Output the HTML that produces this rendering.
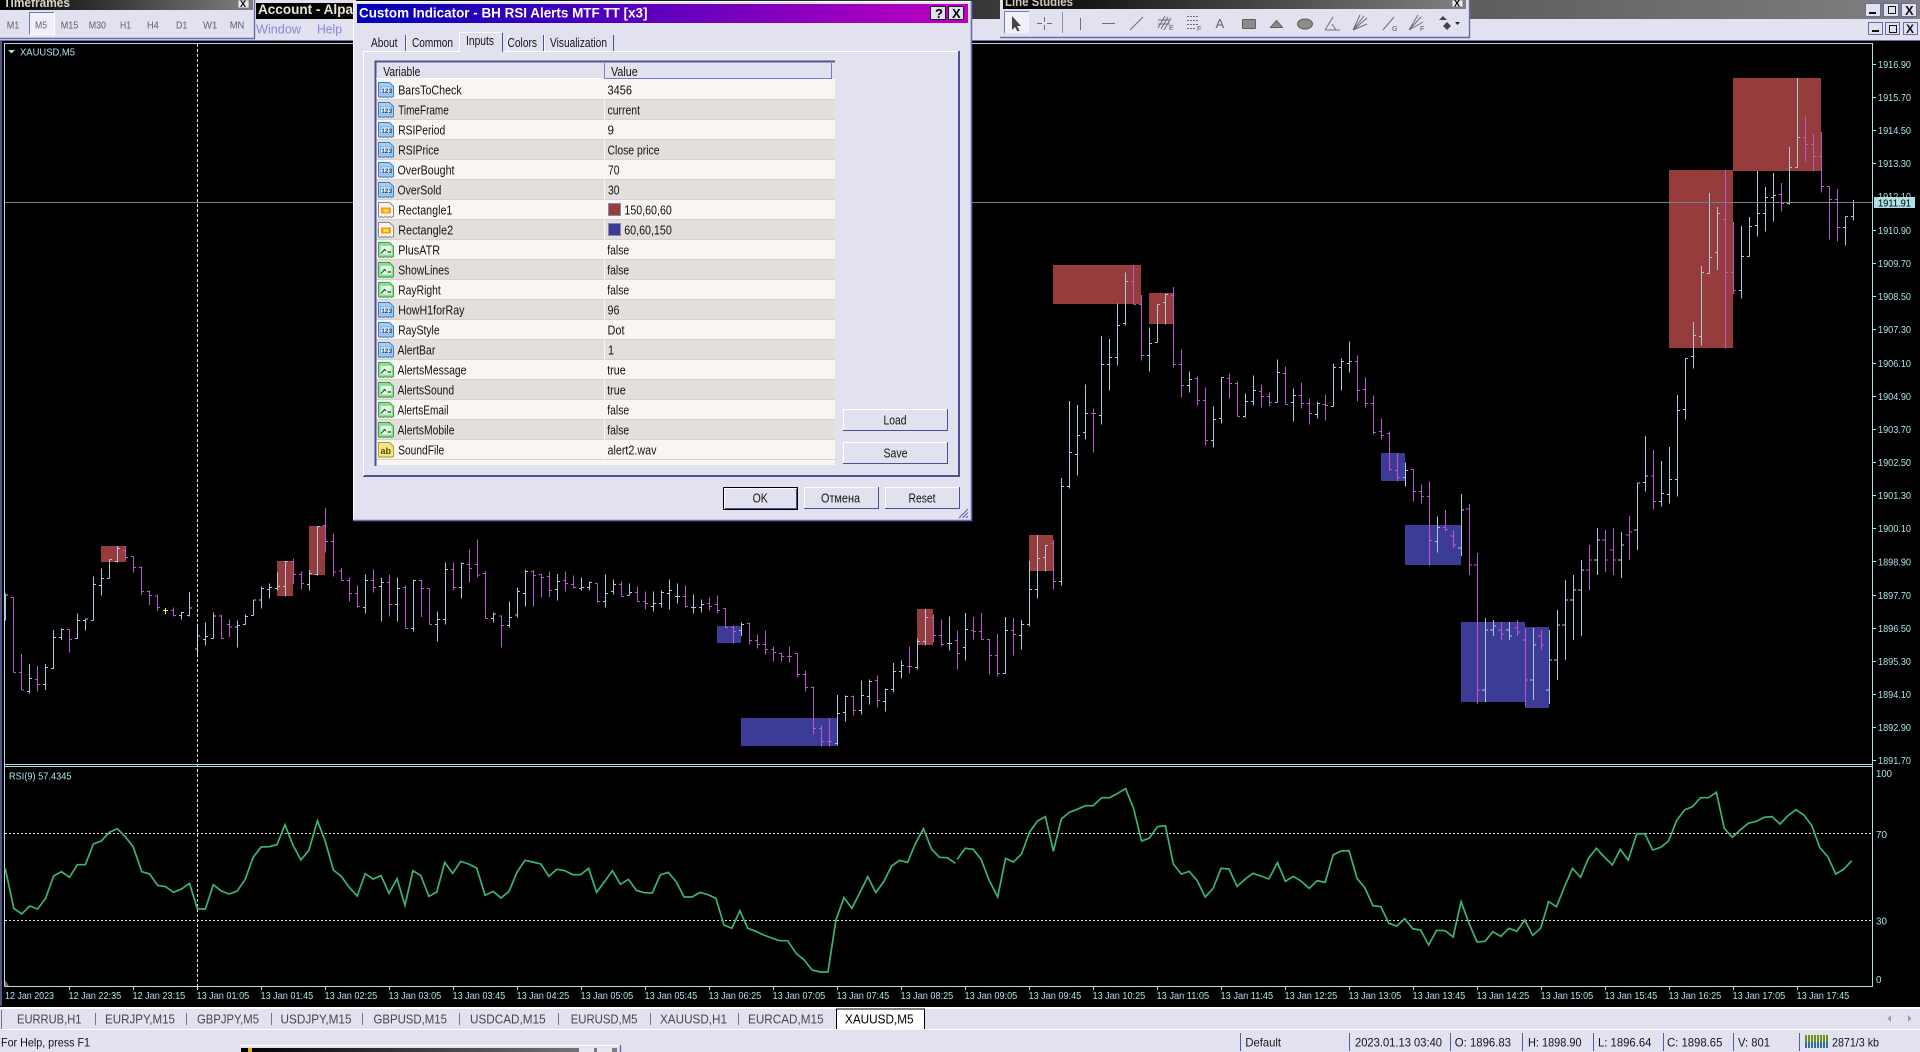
<!DOCTYPE html>
<html><head><meta charset="utf-8"><title>XAUUSD,M5</title>
<style>
html,body{margin:0;padding:0;background:#000;width:1920px;height:1052px;overflow:hidden}
svg{display:block;font-family:"Liberation Sans","Noto Sans CJK SC",sans-serif}
.a text{font-size:10.5px;fill:#b0e0e6}
.r text{font-size:12.5px;fill:#151515}
.ic text{font-size:6.5px;font-weight:bold;fill:#123e78}
.s text{font-size:12px;fill:#151515}
.t text{font-size:12.5px;fill:#484848}
.g{fill:none;stroke:#b0c4de;stroke-width:3;shape-rendering:crispEdges}
.p{fill:none;stroke:#ba55d3;stroke-width:3;shape-rendering:crispEdges}
.g1{fill:none;stroke:#b0c4de;stroke-width:1;shape-rendering:crispEdges}
.p1{fill:none;stroke:#ba55d3;stroke-width:1;shape-rendering:crispEdges}
.ti{fill:none;stroke:#6e6e6e;stroke-width:1}
.tf{fill:#8c8c8c;stroke:#5e5e5e;stroke-width:1}
</style></head><body>
<svg width="1920" height="1052" viewBox="0 0 1920 1052" xmlns="http://www.w3.org/2000/svg">
<defs>
<linearGradient id="gr"><stop offset="0" stop-color="#000"/><stop offset="1" stop-color="#808080"/></linearGradient>
<linearGradient id="ti"><stop offset="0" stop-color="#0000b8"/><stop offset="1" stop-color="#c000c0"/></linearGradient>
<symbol id="n" viewBox="0 0 16 16"><path d="M.5 .5H11.5L15.5 4.5V14.5L13.5 15.5 11.5 14.5 9.5 15.5 7.5 14.5 5.5 15.5 3.5 14.5 1.5 15.5 .5 14.5Z" fill="#a4cdf2" stroke="#3f7fc0"/><rect x="2.5" y="5" width="11" height="7" fill="#e4f0fb" stroke="#5a90c8" stroke-width=".6"/></symbol>
<symbol id="b" viewBox="0 0 16 16"><path d="M.5 .5H11.5L15.5 4.5V14.5L13.5 15.5 11.5 14.5 9.5 15.5 7.5 14.5 5.5 15.5 3.5 14.5 1.5 15.5 .5 14.5Z" fill="#8fe08f" stroke="#3fa050"/><rect x="2.5" y="4" width="11" height="8.5" fill="#e6f8e6"/><path d="M3 11.5 6.5 7.5 8 9M9.5 10H13" fill="none" stroke="#0a5a20" stroke-width="1.2"/></symbol>
<symbol id="c" viewBox="0 0 16 16"><path d="M.5 .5H11.5L15.5 4.5V14.5L13.5 15.5 11.5 14.5 9.5 15.5 7.5 14.5 5.5 15.5 3.5 14.5 1.5 15.5 .5 14.5Z" fill="#f4f4f4" stroke="#8a8a8a"/><rect x="3" y="5.5" width="10" height="6" fill="#ff9a1e"/><rect x="5.5" y="7" width="5" height="3" fill="#ffe830"/></symbol>
<symbol id="y" viewBox="0 0 16 16"><path d="M.5 .5H11.5L15.5 4.5V14.5L13.5 15.5 11.5 14.5 9.5 15.5 7.5 14.5 5.5 15.5 3.5 14.5 1.5 15.5 .5 14.5Z" fill="#f5e488" stroke="#b09a30"/></symbol>
</defs>

<rect width="1920" height="1052" fill="#000"/>

<!-- chart objects -->
<g fill="#963c3c" shape-rendering="crispEdges">
<rect x="101" y="546" width="25" height="16"/><rect x="277" y="561" width="16" height="35"/><rect x="309" y="526" width="16" height="49"/><rect x="917" y="609" width="16" height="36"/><rect x="1053" y="265" width="88" height="39"/><rect x="1149" y="293" width="24" height="31"/><rect x="1029" y="535" width="24" height="36"/><rect x="1669" y="170" width="64" height="178"/><rect x="1733" y="78" width="88" height="93"/>
</g>
<g fill="#3c3c96" shape-rendering="crispEdges">
<rect x="717" y="626" width="24" height="17"/><rect x="741" y="718" width="96" height="28"/><rect x="1381" y="453" width="24" height="28"/><rect x="1405" y="525" width="56" height="40"/><rect x="1461" y="622" width="64" height="80"/><rect x="1525" y="627" width="24" height="81"/>
</g>

<!-- OHLC bars: panel A -->
<g transform="translate(.17,480) scale(.33333)">
<path class="g" d="M16 340V422M16 345h8M88 552V640M88 634h-8M88 595h8M136 552V630M136 613h-8M136 562h8M160 450V567M160 565h-8M160 472h8M184 445V480M184 472h-8M184 448h8M232 400V477M232 475h-8M232 421h8M256 415V452M256 421h-8M256 417h8M280 289V422M280 421h-8M280 313h8M304 265V347M304 316h-8M304 295h8M328 238V296M328 295h-8M328 238h8M352 198V247M352 245h-8M352 205h8M544 396V418M544 406h-8M544 398h8M568 336V410M568 407h-8M568 384h8M592 430V532M592 507h-8M592 468h8M616 427V497M616 478h-8M616 469h8M640 397V476M640 475h-8M640 408h8M712 421V503M712 441h-8M712 436h8M736 403V434M736 433h-8M736 410h8M760 360V406M760 406h-8M760 360h8M784 319V386M784 360h-8M784 325h8M808 310V356M808 328h-8M808 322h8M832 277V332M832 326h-8M832 319h8M856 243V350M856 319h-8M856 245h8M928 270V332M928 313h-8M928 280h8M952 138V287M952 283h-8M952 140h8M1096 283V401M1096 382h-8M1096 301h8M1144 292V425M1144 319h-8M1144 307h8M1192 292V425M1192 373h-8M1192 325h8M1240 300V455M1240 445h-8M1240 301h8M1312 394V485M1312 433h-8M1312 418h8M1336 247V434M1336 418h-8M1336 268h8M1384 247V356M1384 322h-8M1384 250h8"/>
<path class="p" d="M40 352V578M40 352h-8M40 578h8M64 522V630M64 578h-8M64 630h8M112 558V635M112 598h-8M112 613h8M208 448V518M208 448h-8M208 478h8M376 198V240M376 211h-8M376 232h8M400 230V278M400 230h-8M400 262h8M424 260V345M424 262h-8M424 334h8M448 331V375M448 334h-8M448 346h8M472 343V393M472 348h-8M472 382h8M520 382V410M520 392h-8M520 407h8M664 403V477M664 408h-8M664 475h8M688 418V471M688 433h-8M688 441h8M880 235V312M880 245h-8M880 283h8M904 274V329M904 283h-8M904 311h8M976 84V218M976 136h-8M976 184h8M1000 160V290M1000 184h-8M1000 276h8M1024 264V303M1024 273h-8M1024 301h8M1048 292V365M1048 301h-8M1048 340h8M1072 316V383M1072 340h-8M1072 379h8M1120 268V338M1120 301h-8M1120 322h8M1168 283V410M1168 307h-8M1168 373h8M1216 316V445M1216 322h-8M1216 445h8M1264 298V411M1264 301h-8M1264 325h8M1288 325V434M1288 325h-8M1288 433h8M1360 247V332M1360 268h-8M1360 322h8M1408 208V308M1408 253h-8M1408 265h8M1432 178V293M1432 253h-8M1432 285h8"/>
</g>
<!-- panel B -->
<g transform="translate(480.17,480) scale(.33333)">
<path class="g" d="M40 397V428M40 415h-8M40 402h8M88 364V442M88 436h-8M88 412h8M112 322V412M112 405h-8M112 334h8M136 268V380M136 340h-8M136 274h8M232 282V362M232 328h-8M232 304h8M304 292V331M304 325h-8M304 322h8M328 305V332M328 322h-8M328 307h8M376 283V383M376 364h-8M376 340h8M400 298V344M400 334h-8M400 313h8M448 310V347M448 346h-8M448 337h8M520 334V395M520 379h-8M520 370h8M544 331V383M544 370h-8M544 337h8M568 298V389M568 340h-8M568 331h8M592 310V370M592 349h-8M592 349h8M640 343V401M640 382h-8M640 382h8M664 358V398M664 382h-8M664 373h8M784 427V468M784 452h-8M784 433h8M1072 645V797M1072 790h-8M1072 700h8M1096 646V725M1096 697h-8M1096 649h8M1144 601V704M1144 691h-8M1144 646h8M1168 598V674M1168 649h-8M1168 604h8M1216 626V695M1216 664h-8M1216 628h8M1240 549V638M1240 628h-8M1240 574h8M1264 541V596M1264 574h-8M1264 556h8M1312 475V569M1312 562h-8M1312 484h8M1336 387V497M1336 484h-8M1336 412h8M1408 409V512M1408 490h-8M1408 490h8"/>
<path class="p" d="M16 273V415M16 280h-8M16 415h8M64 407V503M64 408h-8M64 436h8M160 270V380M160 274h-8M160 286h8M184 282V353M184 283h-8M184 292h8M208 274V351M208 289h-8M208 331h8M256 274V335M256 301h-8M256 310h8M280 286V326M280 313h-8M280 323h8M352 310V368M352 310h-8M352 365h8M424 304V350M424 313h-8M424 349h8M472 319V365M472 337h-8M472 364h8M496 334V389M496 364h-8M496 370h8M616 316V382M616 349h-8M616 379h8M688 352V392M688 370h-8M688 379h8M712 346V401M712 373h-8M712 391h8M736 385V442M736 385h-8M736 442h8M760 437V491M760 442h-8M760 454h8M808 427V494M808 430h-8M808 481h8M832 463V506M832 481h-8M832 493h8M856 451V524M856 493h-8M856 508h8M880 500V545M880 508h-8M880 517h8M904 517V544M904 520h-8M904 529h8M928 499V547M928 529h-8M928 529h8M952 520V593M952 521h-8M952 583h8M976 571V635M976 583h-8M976 622h8M1000 619V763M1000 622h-8M1000 745h8M1024 736V800M1024 745h-8M1024 784h8M1048 715V800M1048 784h-8M1048 784h8M1120 646V707M1120 649h-8M1120 691h8M1192 586V683M1192 601h-8M1192 661h8M1288 499V580M1288 559h-8M1288 559h8M1360 403V487M1360 412h-8M1360 466h8M1384 418V499M1384 466h-8M1384 493h8M1432 451V569M1432 481h-8M1432 520h8"/>
</g>
<!-- panel C -->
<g transform="translate(960.17,250) scale(.33333)">
<path class="g" d="M16 1089V1232M16 1192h-8M16 1138h8M136 1101V1271M136 1270h-8M136 1141h8M184 1110V1199M184 1156h-8M184 1123h8M208 933V1130M208 1123h-8M208 1018h8M232 855V1046M232 1018h-8M232 925h8M256 886V965M256 922h-8M256 886h8M304 684V1007M304 994h-8M304 709h8M328 453V716M328 709h-8M328 607h8M352 465V677M352 613h-8M352 556h8M376 403V569M376 547h-8M376 490h8M424 258V524M424 496h-8M424 343h8M448 267V422M448 343h-8M448 322h8M472 160V347M472 322h-8M472 226h8M496 67V227M496 220h-8M496 94h8M568 232V365M568 316h-8M568 280h8M592 163V277M592 277h-8M592 163h8M616 130V224M616 157h-8M616 133h8M688 364V428M688 406h-8M688 388h8M760 469V593M760 571h-8M760 508h8M784 382V521M784 505h-8M784 382h8M856 430V502M856 499h-8M856 454h8M880 376V467M880 454h-8M880 421h8M952 328V458M952 457h-8M952 367h8M1000 415V515M1000 457h-8M1000 436h8M1072 454V506M1072 493h-8M1072 460h8M1120 340V470M1120 469h-8M1120 352h8M1144 325V422M1144 352h-8M1144 334h8M1168 274V368M1168 340h-8M1168 334h8M1336 637V710M1336 682h-8M1336 661h8M1432 799V908M1432 874h-8M1432 832h8"/>
<path class="p" d="M40 1101V1169M40 1141h-8M40 1144h8M64 1089V1169M64 1144h-8M64 1168h8M88 1167V1274M88 1168h-8M88 1216h8M112 1152V1280M112 1216h-8M112 1270h8M160 1104V1217M160 1141h-8M160 1153h8M280 870V1019M280 880h-8M280 994h8M400 475V608M400 490h-8M400 490h8M520 45V162M520 94h-8M520 163h8M544 135V332M544 163h-8M544 316h8M640 111V353M640 136h-8M640 343h8M664 298V443M664 343h-8M664 406h8M712 379V467M712 385h-8M712 451h8M736 412V587M736 451h-8M736 571h8M808 370V446M808 385h-8M808 400h8M832 394V500M832 400h-8M832 499h8M904 403V473M904 424h-8M904 439h8M928 427V470M928 439h-8M928 457h8M976 349V464M976 370h-8M976 463h8M1024 397V476M1024 436h-8M1024 460h8M1048 445V524M1048 460h-8M1048 490h8M1096 433V512M1096 463h-8M1096 466h8M1192 316V455M1192 334h-8M1192 421h8M1216 382V473M1216 418h-8M1216 460h8M1240 436V554M1240 460h-8M1240 548h8M1264 505V569M1264 544h-8M1264 556h8M1288 544V662M1288 550h-8M1288 658h8M1312 610V694M1312 661h-8M1312 682h8M1360 658V755M1360 658h-8M1360 724h8M1384 703V761M1384 724h-8M1384 739h8M1408 694V946M1408 739h-8M1408 871h8"/>
</g>
<!-- panel D -->
<g transform="translate(1440.17,40) scale(.33333)">
<path class="g" d="M616 1188V1355M616 1328h-8M616 1308h8M664 1263V1400M664 1384h-8M664 1360h8M688 1221V1391M688 1363h-8M688 1318h8M712 1065V1370M712 1318h-8M712 1111h8M736 955V1139M736 1108h-8M736 955h8M760 846V986M760 949h-8M760 886h8M784 678V917M784 889h-8M784 697h8M808 459V701M808 700h-8M808 652h8M832 501V690M832 637h-8M832 520h8M904 558V776M904 751h-8M904 649h8M928 531V650M928 649h-8M928 559h8M952 393V590M952 556h-8M952 520h8M976 441V575M976 520h-8M976 472h8M1000 399V545M1000 472h-8M1000 466h8M1048 321V493M1048 490h-8M1048 382h8M1072 114V383M1072 382h-8M1072 292h8M1216 529V617M1216 562h-8M1216 529h8M1240 480V542M1240 529h-8M1240 487h8"/>
<path class="p" d="M16 1410V1475M16 1463h-8M16 1468h8M640 1230V1409M640 1308h-8M640 1384h8M856 390V926M856 538h-8M856 697h8M880 546V764M880 697h-8M880 751h8M1024 429V515M1024 463h-8M1024 490h8M1096 228V365M1096 292h-8M1096 313h8M1120 282V395M1120 313h-8M1120 349h8M1144 276V458M1144 349h-8M1144 439h8M1168 439V599M1168 439h-8M1168 478h8M1192 447V605M1192 478h-8M1192 562h8"/>
</g>
<!-- middle bars -->
<path class="g1" d="M1461.5 494V556M1461 548h-3M1461 510h3M1485.5 618V702M1485 690h-3M1485 630h3M1493.5 620V636M1493 630h-3M1493 626h3M1509.5 622V640M1509 630h-3M1509 636h3M1533.5 628V700M1533 680h-3M1533 645h3M1549.5 630V704M1549 690h-3M1549 660h3M1557.5 610V680M1557 660h-3M1557 625h3M1565.5 580V660M1565 625h-3M1565 600h3M1573.5 575V640M1573 600h-3M1573 590h3M1581.5 560V636M1581 590h-3M1581 570h3M1597.5 528V575M1597 560h-3M1597 540h3M1621.5 532V578M1621 560h-3M1621 545h3M1637.5 483V550M1637 530h-3M1637 483h3"/>
<path class="p1" d="M1453.5 530V548M1453 536h-3M1453 545h3M1469.5 504V575M1469 509h-3M1469 565h3M1477.5 553V704M1477 565h-3M1477 690h3M1501.5 622V640M1501 630h-3M1501 634h3M1517.5 620V636M1517 628h-3M1517 632h3M1525.5 628V706M1525 640h-3M1525 680h3M1541.5 630V650M1541 636h-3M1541 645h3M1589.5 545V590M1589 570h-3M1589 560h3M1605.5 530V572M1605 540h-3M1605 560h3M1613.5 528V575M1613 550h-3M1613 560h3M1629.5 516V560M1629 535h-3M1629 532h3"/>
<g stroke="#ffff00" shape-rendering="crispEdges"><path d="M165.5 608V614M163 610.5H168"/></g>

<!-- crosshair -->
<path d="M5 202.5H1872" stroke="#708090" shape-rendering="crispEdges"/>
<path d="M197.5 44V986" stroke="#e8e8e8" stroke-dasharray="3 2" shape-rendering="crispEdges"/>

<!-- frames -->
<g shape-rendering="crispEdges" fill="none" stroke="#b0e0e6">
<path d="M4.5 986.5V43.5H1872.5V986.5H4.5"/>
<path d="M4 764.5H1873M4 766.5H1873"/>
<path d="M69.5 987v3M133.5 987v3M197.5 987v3M261.5 987v3M325.5 987v3M389.5 987v3M453.5 987v3M517.5 987v3M581.5 987v3M645.5 987v3M709.5 987v3M773.5 987v3M837.5 987v3M901.5 987v3M965.5 987v3M1029.5 987v3M1093.5 987v3M1157.5 987v3M1221.5 987v3M1285.5 987v3M1349.5 987v3M1413.5 987v3M1477.5 987v3M1541.5 987v3M1605.5 987v3M1669.5 987v3M1733.5 987v3M1797.5 987v3"/>
<path d="M1873 64.5h3M1873 97.5h3M1873 130.5h3M1873 163.5h3M1873 230.5h3M1873 263.5h3M1873 296.5h3M1873 329.5h3M1873 363.5h3M1873 396.5h3M1873 429.5h3M1873 462.5h3M1873 495.5h3M1873 528.5h3M1873 561.5h3M1873 595.5h3M1873 628.5h3M1873 661.5h3M1873 694.5h3M1873 727.5h3M1873 760.5h3"/>
</g>
<path d="M1 40V1006" stroke="#7070b0" stroke-width="1.5"/>
<path d="M8 50H15L11.5 53.5Z" fill="#b0e0e6"/>
<path d="M5 980L9 986H5Z" fill="#707078"/>

<!-- RSI -->
<path d="M5 833.5H1872M5 920.5H1872" stroke="#dcdcdc" stroke-dasharray="2 2" shape-rendering="crispEdges"/>
<polyline transform="translate(.3,760) scale(.6122,.33333)" fill="none" stroke="#3cb371" stroke-width="1.7" style="vector-effect:non-scaling-stroke" points="8,325 22,445 35,462 48,438 61,447 74,415 87,348 100,335 113,352 126,314 139,314 152,252 165,243 178,217 191,206 204,230 217,260 231,335 244,342 257,376 270,380 283,397 296,387 309,370 322,447 335,447 348,374 361,393 374,402 387,393 400,358 413,292 426,261 439,260 452,254 465,194 478,255 491,300 504,271 518,182 531,245 544,330 557,349 570,382 583,408 596,341 609,357 622,347 635,400 648,356 661,436 674,332 687,347 700,409 713,396 726,307 739,340 752,304 765,312 778,324 792,406 805,394 818,414 831,394 844,337 857,301 870,306 883,312 896,349 909,328 922,332 935,344 948,344 961,325 974,397 987,365 1000,332 1013,373 1026,358 1039,391 1052,398 1065,399 1078,345 1091,337 1104,365 1117,411 1130,411 1143,397 1156,404 1169,415 1182,495 1195,505 1208,452 1221,505 1234,514 1247,525 1260,534 1273,542 1286,542 1300,580 1313,600 1326,630 1339,636 1352,636 1365,480 1378,413 1391,445 1404,398 1417,350 1430,398 1443,365 1456,318 1469,301 1482,307 1495,250 1508,206 1521,267 1534,292 1547,293 1560,310"/>
<polyline transform="translate(960.3,760) scale(.6122,.33333)" fill="none" stroke="#3cb371" stroke-width="1.7" style="vector-effect:non-scaling-stroke" points="-5,298 8,265 21,268 34,298 47,360 61,411 74,295 87,306 100,282 113,217 126,183 139,170 152,274 165,177 178,157 191,148 204,137 217,137 231,113 244,113 257,100 270,86 283,145 296,243 309,234 322,200 335,197 348,312 361,342 374,334 387,362 400,411 413,385 426,325 439,327 452,379 465,358 478,340 491,348 504,357 518,308 531,364 544,349 557,364 570,385 583,362 596,367 609,285 622,273 635,272 648,355 661,384 674,437 687,440 700,490 713,498 726,476 739,506 752,510 765,555 778,511 792,512 805,531 818,425 831,490 844,546 857,544 870,515 883,529 896,505 909,514 922,480 935,526 948,505 961,425 974,440 987,380 1000,325 1013,352 1026,295 1039,265 1052,291 1065,315 1078,268 1091,300 1105,222 1118,221 1131,270 1144,262 1157,243 1170,182 1183,150 1196,140 1209,113 1222,113 1235,97 1248,205 1261,232 1274,210 1287,190 1300,184 1313,172 1326,170 1339,192 1352,167 1365,149 1378,165 1391,197 1404,263 1417,290 1430,342 1443,328 1456,302"/>

<!-- axis labels -->
<g class="a">
<text x="20" y="55.5" textLength="55" lengthAdjust="spacingAndGlyphs">XAUUSD,M5</text>
<text x="9" y="779.5" textLength="62.5" lengthAdjust="spacingAndGlyphs">RSI(9) 57.4345</text>
<text x="1878" y="68" textLength="33" lengthAdjust="spacingAndGlyphs">1916.90</text>
<text x="1878" y="101" textLength="33" lengthAdjust="spacingAndGlyphs">1915.70</text>
<text x="1878" y="134" textLength="33" lengthAdjust="spacingAndGlyphs">1914.50</text>
<text x="1878" y="167" textLength="33" lengthAdjust="spacingAndGlyphs">1913.30</text>
<text x="1878" y="200" textLength="33" lengthAdjust="spacingAndGlyphs">1912.10</text>
<text x="1878" y="234" textLength="33" lengthAdjust="spacingAndGlyphs">1910.90</text>
<text x="1878" y="267" textLength="33" lengthAdjust="spacingAndGlyphs">1909.70</text>
<text x="1878" y="300" textLength="33" lengthAdjust="spacingAndGlyphs">1908.50</text>
<text x="1878" y="333" textLength="33" lengthAdjust="spacingAndGlyphs">1907.30</text>
<text x="1878" y="367" textLength="33" lengthAdjust="spacingAndGlyphs">1906.10</text>
<text x="1878" y="400" textLength="33" lengthAdjust="spacingAndGlyphs">1904.90</text>
<text x="1878" y="433" textLength="33" lengthAdjust="spacingAndGlyphs">1903.70</text>
<text x="1878" y="466" textLength="33" lengthAdjust="spacingAndGlyphs">1902.50</text>
<text x="1878" y="499" textLength="33" lengthAdjust="spacingAndGlyphs">1901.30</text>
<text x="1878" y="532" textLength="33" lengthAdjust="spacingAndGlyphs">1900.10</text>
<text x="1878" y="565.5" textLength="33" lengthAdjust="spacingAndGlyphs">1898.90</text>
<text x="1878" y="599" textLength="33" lengthAdjust="spacingAndGlyphs">1897.70</text>
<text x="1878" y="632" textLength="33" lengthAdjust="spacingAndGlyphs">1896.50</text>
<text x="1878" y="665" textLength="33" lengthAdjust="spacingAndGlyphs">1895.30</text>
<text x="1878" y="698" textLength="33" lengthAdjust="spacingAndGlyphs">1894.10</text>
<text x="1878" y="731" textLength="33" lengthAdjust="spacingAndGlyphs">1892.90</text>
<text x="1878" y="764" textLength="33" lengthAdjust="spacingAndGlyphs">1891.70</text>
<text x="1876" y="777" textLength="16" lengthAdjust="spacingAndGlyphs">100</text>
<text x="1876" y="838" textLength="11" lengthAdjust="spacingAndGlyphs">70</text>
<text x="1876" y="924.5" textLength="11" lengthAdjust="spacingAndGlyphs">30</text>
<text x="1876" y="983" textLength="5.5" lengthAdjust="spacingAndGlyphs">0</text>
<text x="5" y="999" textLength="49" lengthAdjust="spacingAndGlyphs">12 Jan 2023</text>
<text x="68.5" y="999" textLength="52.7" lengthAdjust="spacingAndGlyphs">12 Jan 22:35</text>
<text x="132.5" y="999" textLength="52.7" lengthAdjust="spacingAndGlyphs">12 Jan 23:15</text>
<text x="196.5" y="999" textLength="52.7" lengthAdjust="spacingAndGlyphs">13 Jan 01:05</text>
<text x="260.5" y="999" textLength="52.7" lengthAdjust="spacingAndGlyphs">13 Jan 01:45</text>
<text x="324.5" y="999" textLength="52.7" lengthAdjust="spacingAndGlyphs">13 Jan 02:25</text>
<text x="388.5" y="999" textLength="52.7" lengthAdjust="spacingAndGlyphs">13 Jan 03:05</text>
<text x="452.5" y="999" textLength="52.7" lengthAdjust="spacingAndGlyphs">13 Jan 03:45</text>
<text x="516.5" y="999" textLength="52.7" lengthAdjust="spacingAndGlyphs">13 Jan 04:25</text>
<text x="580.5" y="999" textLength="52.7" lengthAdjust="spacingAndGlyphs">13 Jan 05:05</text>
<text x="644.5" y="999" textLength="52.7" lengthAdjust="spacingAndGlyphs">13 Jan 05:45</text>
<text x="708.5" y="999" textLength="52.7" lengthAdjust="spacingAndGlyphs">13 Jan 06:25</text>
<text x="772.5" y="999" textLength="52.7" lengthAdjust="spacingAndGlyphs">13 Jan 07:05</text>
<text x="836.5" y="999" textLength="52.7" lengthAdjust="spacingAndGlyphs">13 Jan 07:45</text>
<text x="900.5" y="999" textLength="52.7" lengthAdjust="spacingAndGlyphs">13 Jan 08:25</text>
<text x="964.5" y="999" textLength="52.7" lengthAdjust="spacingAndGlyphs">13 Jan 09:05</text>
<text x="1028.5" y="999" textLength="52.7" lengthAdjust="spacingAndGlyphs">13 Jan 09:45</text>
<text x="1092.5" y="999" textLength="52.7" lengthAdjust="spacingAndGlyphs">13 Jan 10:25</text>
<text x="1156.5" y="999" textLength="52.7" lengthAdjust="spacingAndGlyphs">13 Jan 11:05</text>
<text x="1220.5" y="999" textLength="52.7" lengthAdjust="spacingAndGlyphs">13 Jan 11:45</text>
<text x="1284.5" y="999" textLength="52.7" lengthAdjust="spacingAndGlyphs">13 Jan 12:25</text>
<text x="1348.5" y="999" textLength="52.7" lengthAdjust="spacingAndGlyphs">13 Jan 13:05</text>
<text x="1412.5" y="999" textLength="52.7" lengthAdjust="spacingAndGlyphs">13 Jan 13:45</text>
<text x="1476.5" y="999" textLength="52.7" lengthAdjust="spacingAndGlyphs">13 Jan 14:25</text>
<text x="1540.5" y="999" textLength="52.7" lengthAdjust="spacingAndGlyphs">13 Jan 15:05</text>
<text x="1604.5" y="999" textLength="52.7" lengthAdjust="spacingAndGlyphs">13 Jan 15:45</text>
<text x="1668.5" y="999" textLength="52.7" lengthAdjust="spacingAndGlyphs">13 Jan 16:25</text>
<text x="1732.5" y="999" textLength="52.7" lengthAdjust="spacingAndGlyphs">13 Jan 17:05</text>
<text x="1796.5" y="999" textLength="52.7" lengthAdjust="spacingAndGlyphs">13 Jan 17:45</text>
</g>
<rect x="1874" y="197" width="41" height="11" fill="#b0e0e6"/>
<text x="1878" y="206.5" font-size="10.5" fill="#000" textLength="33" lengthAdjust="spacingAndGlyphs">1911.91</text>

<!-- top chrome -->
<rect x="0" y="0" width="1920" height="40" fill="#e1e1f0"/>
<rect x="0" y="40" width="1920" height="1" fill="#6a6aa8"/>
<rect x="256" y="0" width="1664" height="19" fill="url(#gr)"/>
<rect x="256" y="0" width="100" height="3" fill="#e1e1f0"/>
<text x="258" y="14" font-size="13.5" font-weight="bold" fill="#ece4d4" textLength="95" lengthAdjust="spacingAndGlyphs">Account - Alpa</text>
<text x="256" y="33.5" font-size="13" fill="#8888d8" textLength="45" lengthAdjust="spacingAndGlyphs">Window</text>
<text x="317" y="33.5" font-size="13" fill="#8888d8" textLength="25" lengthAdjust="spacingAndGlyphs">Help</text>

<!-- MDI buttons -->
<g fill="#e1e1f0" stroke="#6a6aa8" shape-rendering="crispEdges">
<rect x="1865.5" y="3.5" width="15" height="13"/><rect x="1883.5" y="3.5" width="15" height="13"/><rect x="1901.5" y="3.5" width="15" height="13"/>
<rect x="1868.5" y="22.5" width="14" height="12"/><rect x="1885.5" y="22.5" width="14" height="12"/><rect x="1903.5" y="22.5" width="14" height="12"/>
</g>
<g fill="#111"><rect x="1869" y="12" width="7" height="2"/><rect x="1872" y="30" width="7" height="2"/></g>
<g fill="none" stroke="#111"><rect x="1888.5" y="6.5" width="7" height="7"/><rect x="1889.5" y="25.5" width="7" height="7"/></g>
<text x="1905" y="15" font-size="13" font-weight="bold" fill="#111">X</text>
<text x="1906" y="33" font-size="12" font-weight="bold" fill="#111">X</text>

<!-- Timeframes toolbar -->
<rect x="0" y="0" width="255" height="39" fill="#e1e1f0"/>
<rect x="0" y="0" width="253" height="10" fill="url(#gr)"/>
<text x="3.5" y="7" font-size="13" font-weight="bold" fill="#dcd4c4" textLength="66.5" lengthAdjust="spacingAndGlyphs">Timeframes</text>
<rect x="238" y="0" width="11" height="8" fill="#e8e8f2" stroke="#777" stroke-width=".8"/>
<text x="240" y="7" font-size="9" font-weight="bold" fill="#000">X</text>
<path d="M0 38.5H255M254.5 0V39" stroke="#6a6aa8" stroke-width="1.4" fill="none"/>
<rect x="29" y="12" width="25" height="23" fill="#f0f0f8"/>
<path d="M29.5 35V12.5H54" stroke="#7878b8" fill="none" shape-rendering="crispEdges"/>
<path d="M29.5 34.5H54.5V12" stroke="#fff" fill="none" shape-rendering="crispEdges"/>
<g font-size="10.5" fill="#606060">
<text x="6.7" y="28.5" textLength="12.6" lengthAdjust="spacingAndGlyphs">M1</text>
<text x="35" y="28.5" textLength="12" lengthAdjust="spacingAndGlyphs">M5</text>
<text x="60.7" y="28.5" textLength="17.6" lengthAdjust="spacingAndGlyphs">M15</text>
<text x="88.7" y="28.5" textLength="17.3" lengthAdjust="spacingAndGlyphs">M30</text>
<text x="120" y="28.5" textLength="11" lengthAdjust="spacingAndGlyphs">H1</text>
<text x="147" y="28.5" textLength="11.7" lengthAdjust="spacingAndGlyphs">H4</text>
<text x="176" y="28.5" textLength="11.3" lengthAdjust="spacingAndGlyphs">D1</text>
<text x="203" y="28.5" textLength="14.3" lengthAdjust="spacingAndGlyphs">W1</text>
<text x="229.7" y="28.5" textLength="14.6" lengthAdjust="spacingAndGlyphs">MN</text>
</g>

<!-- Line Studies toolbar -->
<rect x="1000" y="0" width="470" height="39" fill="#e1e1f0"/>
<rect x="1003" y="0" width="463" height="9" fill="url(#gr)"/>
<text x="1005" y="6" font-size="13" font-weight="bold" fill="#cfc7b7" textLength="68" lengthAdjust="spacingAndGlyphs">Line Studies</text>
<rect x="1452" y="0" width="11" height="7" fill="#e8e8f2" stroke="#777" stroke-width=".8"/>
<text x="1454" y="6.5" font-size="9" font-weight="bold" fill="#000">X</text>
<path d="M1000 37.5H1470M1469.5 0V38" stroke="#6a6aa8" stroke-width="1.4" fill="none"/>
<rect x="1004" y="11" width="25" height="22" fill="#f0f0f8"/>
<path d="M1004.5 33V11.5H1029" stroke="#7878b8" fill="none" shape-rendering="crispEdges"/>
<path d="M1012 16V30L1015 27 1017.5 31.5 1019.5 30.5 1017 26H1021Z" fill="#444"/>
<path class="ti" d="M1044.5 17V22M1044.5 25V30M1037 23.5H1042M1047 23.5H1052"/>
<path d="M1062.5 12V33" stroke="#909090"/>
<path class="ti" d="M1080.5 18V30M1102 23.5H1115M1130 30 1143 17"/>
<path class="ti" d="M1158 28 1165 16M1161 29 1168 17M1164 30 1171 18M1158 20H1170M1158 24H1170" stroke-width=".9"/>
<text x="1169" y="30" font-size="7" fill="#555">E</text>
<path class="ti" stroke-dasharray="2 1" d="M1187 16.5H1199M1187 20.5H1199M1187 24.5H1199M1187 28.5H1196"/>
<text x="1197" y="31" font-size="7" fill="#555">F</text>
<text x="1215.5" y="28" font-size="13" fill="#666">A</text>
<rect class="tf" x="1242.5" y="19.5" width="13" height="9" rx="1"/>
<path class="tf" d="M1270.5 27.5 1276.5 20.5 1282.5 27.5Z"/>
<ellipse class="tf" cx="1305" cy="24" rx="7.5" ry="5"/>
<path class="ti" d="M1325 30H1340M1325 30 1333 17M1332 24 1336 30"/>
<path class="ti" d="M1353 30 1367 18M1353 30 1364 16M1353 30 1360 15M1353 30 1367 24"/>
<path class="ti" d="M1383 30 1394 17"/><text x="1392" y="31" font-size="7" fill="#555">G</text>
<path class="ti" d="M1409 30 1421 17M1409 30 1418 15M1409 30 1423 22"/><text x="1420" y="31" font-size="7" fill="#555">F</text>
<path d="M1439 20 1443 16 1447 20ZM1443 26 1447 22 1451 26 1447 30Z" fill="#444"/>
<path d="M1455 22H1460L1457.5 25Z" fill="#222"/>

<!-- Dialog -->
<rect x="353" y="1" width="618" height="520" fill="#e1e1f0"/>
<path d="M353.5 521V1.5H971" stroke="#fff" fill="none"/>
<path d="M353 520.5H971.5V1" stroke="#6a6aa8" stroke-width="1.6" fill="none"/>
<rect x="357" y="4" width="611" height="19" fill="url(#ti)"/>
<text x="359" y="17.7" font-size="13.5" font-weight="bold" fill="#fff" textLength="288.5" lengthAdjust="spacingAndGlyphs">Custom Indicator - BH RSI Alerts MTF TT [x3]</text>
<g fill="#e1e1f0" stroke="#222" shape-rendering="crispEdges"><rect x="930.5" y="6.5" width="15" height="13"/><rect x="948.5" y="6.5" width="15" height="13"/></g>
<text x="935" y="18" font-size="13" font-weight="bold" fill="#000">?</text>
<text x="952" y="18" font-size="13" font-weight="bold" fill="#000">X</text>

<!-- tab control -->
<path d="M363 51.5H960" stroke="#fff" shape-rendering="crispEdges"/>
<path d="M959 51V477M363 476H960" stroke="#505090" stroke-width="2" fill="none" shape-rendering="crispEdges"/>
<path d="M363.5 51V476" stroke="#fff" shape-rendering="crispEdges"/>
<rect x="459" y="32" width="44" height="21" fill="#e1e1f0"/>
<path d="M459.5 52V32.5H502" stroke="#fff" fill="none" shape-rendering="crispEdges"/>
<path d="M502.5 33V52M405.5 35V51M543.5 35V51M613.5 35V51" stroke="#505090" fill="none" shape-rendering="crispEdges"/>
<path d="M406.5 35V51M508 35V51M544.5 35V51" stroke="#fff" fill="none" shape-rendering="crispEdges" opacity=".8"/>
<g class="r">
<text x="371" y="47" textLength="26.5" lengthAdjust="spacingAndGlyphs">About</text>
<text x="412" y="47" textLength="41" lengthAdjust="spacingAndGlyphs">Common</text>
<text x="466" y="45" textLength="28" lengthAdjust="spacingAndGlyphs">Inputs</text>
<text x="507.5" y="47" textLength="29.5" lengthAdjust="spacingAndGlyphs">Colors</text>
<text x="550" y="47" textLength="57" lengthAdjust="spacingAndGlyphs">Visualization</text>
</g>

<!-- grid -->
<rect x="375" y="61" width="460" height="404" fill="#f8f5f3"/>
<rect x="376" y="63" width="459" height="16" fill="#e1e1f0"/>
<g fill="#e3dfdc" shape-rendering="crispEdges">
<rect x="376" y="100" width="459" height="19"/><rect x="376" y="140" width="459" height="19"/><rect x="376" y="180" width="459" height="19"/><rect x="376" y="220" width="459" height="19"/><rect x="376" y="260" width="459" height="19"/><rect x="376" y="300" width="459" height="19"/><rect x="376" y="340" width="459" height="19"/><rect x="376" y="380" width="459" height="19"/><rect x="376" y="420" width="459" height="19"/>
</g>
<path d="M376 99.5H835M376 119.5H835M376 139.5H835M376 159.5H835M376 179.5H835M376 199.5H835M376 219.5H835M376 239.5H835M376 259.5H835M376 279.5H835M376 299.5H835M376 319.5H835M376 339.5H835M376 359.5H835M376 379.5H835M376 399.5H835M376 419.5H835M376 439.5H835M376 459.5H835" stroke="#d6d2cf" shape-rendering="crispEdges"/>
<path d="M604.5 79V460" stroke="#f8f5f3" shape-rendering="crispEdges"/>
<path d="M375.5 466V61.5H835" stroke="#505090" stroke-width="1.6" fill="none" shape-rendering="crispEdges"/>
<path d="M604.5 63V79" stroke="#8080b0" shape-rendering="crispEdges"/>
<path d="M605 78.5H831.5V63" stroke="#7878c0" fill="none" shape-rendering="crispEdges"/>
<path d="M376 78.5H604" stroke="#fff" shape-rendering="crispEdges"/>
<g class="r">
<text x="383.3" y="76" textLength="37" lengthAdjust="spacingAndGlyphs">Variable</text>
<text x="611" y="76" textLength="26.7" lengthAdjust="spacingAndGlyphs">Value</text>
</g>

<!-- icons -->
<use href="#n" x="378" y="82" width="16" height="16"/>
<use href="#n" x="378" y="102" width="16" height="16"/>
<use href="#n" x="378" y="122" width="16" height="16"/>
<use href="#n" x="378" y="142" width="16" height="16"/>
<use href="#n" x="378" y="162" width="16" height="16"/>
<use href="#n" x="378" y="182" width="16" height="16"/>
<use href="#c" x="378" y="202" width="16" height="16"/>
<use href="#c" x="378" y="222" width="16" height="16"/>
<use href="#b" x="378" y="242" width="16" height="16"/>
<use href="#b" x="378" y="262" width="16" height="16"/>
<use href="#b" x="378" y="282" width="16" height="16"/>
<use href="#n" x="378" y="302" width="16" height="16"/>
<use href="#n" x="378" y="322" width="16" height="16"/>
<use href="#n" x="378" y="342" width="16" height="16"/>
<use href="#b" x="378" y="362" width="16" height="16"/>
<use href="#b" x="378" y="382" width="16" height="16"/>
<use href="#b" x="378" y="402" width="16" height="16"/>
<use href="#b" x="378" y="422" width="16" height="16"/>
<use href="#y" x="378" y="442" width="16" height="16"/>
<g class="ic">
<text x="381.2" y="93">123</text><text x="381.2" y="113">123</text><text x="381.2" y="133">123</text><text x="381.2" y="153">123</text><text x="381.2" y="173">123</text><text x="381.2" y="193">123</text><text x="381.2" y="313">123</text><text x="381.2" y="333">123</text><text x="381.2" y="353">123</text>
</g>
<text x="380.5" y="454" font-size="9" font-weight="bold" fill="#5a5000">ab</text>

<!-- names -->
<g class="r">
<text x="398.2" y="94.3" textLength="63.5" lengthAdjust="spacingAndGlyphs">BarsToCheck</text>
<text x="398.2" y="114.3" textLength="50.6" lengthAdjust="spacingAndGlyphs">TimeFrame</text>
<text x="398.2" y="134.3" textLength="47" lengthAdjust="spacingAndGlyphs">RSIPeriod</text>
<text x="398.2" y="154.3" textLength="41" lengthAdjust="spacingAndGlyphs">RSIPrice</text>
<text x="397.5" y="174.3" textLength="57" lengthAdjust="spacingAndGlyphs">OverBought</text>
<text x="397.5" y="194.3" textLength="43.8" lengthAdjust="spacingAndGlyphs">OverSold</text>
<text x="398.2" y="214.3" textLength="54.2" lengthAdjust="spacingAndGlyphs">Rectangle1</text>
<text x="398.2" y="234.3" textLength="55" lengthAdjust="spacingAndGlyphs">Rectangle2</text>
<text x="398.2" y="254.3" textLength="41.8" lengthAdjust="spacingAndGlyphs">PlusATR</text>
<text x="398.2" y="274.3" textLength="51" lengthAdjust="spacingAndGlyphs">ShowLines</text>
<text x="398.2" y="294.3" textLength="42.6" lengthAdjust="spacingAndGlyphs">RayRight</text>
<text x="398.2" y="314.3" textLength="66.3" lengthAdjust="spacingAndGlyphs">HowH1forRay</text>
<text x="398.2" y="334.3" textLength="41.4" lengthAdjust="spacingAndGlyphs">RayStyle</text>
<text x="397.5" y="354.3" textLength="37.8" lengthAdjust="spacingAndGlyphs">AlertBar</text>
<text x="397.5" y="374.3" textLength="69" lengthAdjust="spacingAndGlyphs">AlertsMessage</text>
<text x="397.5" y="394.3" textLength="56.6" lengthAdjust="spacingAndGlyphs">AlertsSound</text>
<text x="397.5" y="414.3" textLength="51" lengthAdjust="spacingAndGlyphs">AlertsEmail</text>
<text x="397.5" y="434.3" textLength="57" lengthAdjust="spacingAndGlyphs">AlertsMobile</text>
<text x="398.2" y="454.3" textLength="46" lengthAdjust="spacingAndGlyphs">SoundFile</text>
<!-- values -->
<text x="607.5" y="94.3" textLength="24.5" lengthAdjust="spacingAndGlyphs">3456</text>
<text x="607.5" y="114.3" textLength="32.5" lengthAdjust="spacingAndGlyphs">current</text>
<text x="607.5" y="134.3" textLength="6.5" lengthAdjust="spacingAndGlyphs">9</text>
<text x="607.5" y="154.3" textLength="52" lengthAdjust="spacingAndGlyphs">Close price</text>
<text x="608" y="174.3" textLength="11.6" lengthAdjust="spacingAndGlyphs">70</text>
<text x="608" y="194.3" textLength="11.6" lengthAdjust="spacingAndGlyphs">30</text>
<text x="624.4" y="214.3" textLength="47.4" lengthAdjust="spacingAndGlyphs">150,60,60</text>
<text x="624.2" y="234.3" textLength="47.6" lengthAdjust="spacingAndGlyphs">60,60,150</text>
<text x="607.2" y="254.3" textLength="22" lengthAdjust="spacingAndGlyphs">false</text>
<text x="607.2" y="274.3" textLength="22" lengthAdjust="spacingAndGlyphs">false</text>
<text x="607.2" y="294.3" textLength="22" lengthAdjust="spacingAndGlyphs">false</text>
<text x="607.5" y="314.3" textLength="12" lengthAdjust="spacingAndGlyphs">96</text>
<text x="607.5" y="334.3" textLength="17" lengthAdjust="spacingAndGlyphs">Dot</text>
<text x="608" y="354.3" textLength="6" lengthAdjust="spacingAndGlyphs">1</text>
<text x="607.2" y="374.3" textLength="18.5" lengthAdjust="spacingAndGlyphs">true</text>
<text x="607.2" y="394.3" textLength="18.5" lengthAdjust="spacingAndGlyphs">true</text>
<text x="607.2" y="414.3" textLength="22" lengthAdjust="spacingAndGlyphs">false</text>
<text x="607.2" y="434.3" textLength="22" lengthAdjust="spacingAndGlyphs">false</text>
<text x="607.5" y="454.3" textLength="49" lengthAdjust="spacingAndGlyphs">alert2.wav</text>
</g>
<rect x="608.5" y="203.5" width="12" height="12" fill="#963c3c" stroke="#8a8aa8" shape-rendering="crispEdges"/>
<rect x="608.5" y="223.5" width="12" height="12" fill="#3c3c96" stroke="#8a8aa8" shape-rendering="crispEdges"/>

<!-- buttons -->
<g fill="#e1e1f0" shape-rendering="crispEdges">
<rect x="843" y="409" width="105" height="22"/><rect x="843" y="442" width="105" height="22"/>
<rect x="804" y="487" width="75" height="22"/><rect x="885" y="487" width="75" height="22"/>
</g>
<g fill="none" shape-rendering="crispEdges">
<path d="M843.5 431V409.5H948M843.5 464V442.5H948M804.5 509V487.5H879M885.5 509V487.5H960" stroke="#fff"/>
<path d="M843 430.5H947.5V409M843 463.5H947.5V442M804 508.5H878.5V487M885 508.5H959.5V487" stroke="#505090" stroke-width="1.4"/>
<rect x="723.5" y="487.5" width="74" height="22" fill="#e1e1f0" stroke="#000" stroke-width="1"/>
<path d="M725 508.5H796.5V489" stroke="#505090"/>
<path d="M724.5 508.5V488.5H796" stroke="#fff"/>
</g>
<g class="r">
<text x="883.5" y="424.5" textLength="23" lengthAdjust="spacingAndGlyphs">Load</text>
<text x="883.5" y="457.5" textLength="24" lengthAdjust="spacingAndGlyphs">Save</text>
<text x="752.6" y="502.5" textLength="15.2" lengthAdjust="spacingAndGlyphs">OK</text>
<text x="821" y="502.5" textLength="39" lengthAdjust="spacingAndGlyphs">Отмена</text>
<text x="908.5" y="502.5" textLength="27" lengthAdjust="spacingAndGlyphs">Reset</text>
</g>
<path d="M968 509 959 518M968 512.5 962.5 518M968 516 966 518" stroke="#6a6aa8" stroke-width="1.2"/>

<!-- tabs bar -->
<rect x="0" y="1007" width="1920" height="45" fill="#e1e1f0"/>
<path d="M0 1008H1920" stroke="#fff" stroke-width="2" shape-rendering="crispEdges"/>
<path d="M0 1029.5H1920" stroke="#fff" shape-rendering="crispEdges"/>
<path d="M1.5 1010V1029M95.5 1013V1025M186.5 1013V1025M271.5 1013V1025M362.5 1013V1025M459.5 1013V1025M558.5 1013V1025M650.5 1013V1025M738.5 1013V1025" stroke="#777" shape-rendering="crispEdges"/>
<rect x="836" y="1009" width="89" height="20" fill="#fff"/>
<path d="M836.5 1029V1009H924.5V1029" stroke="#000" fill="none" stroke-width="1" shape-rendering="crispEdges"/>
<g class="t">
<text x="17" y="1023.7" textLength="64.5" lengthAdjust="spacingAndGlyphs">EURRUB,H1</text>
<text x="105" y="1023.7" textLength="70" lengthAdjust="spacingAndGlyphs">EURJPY,M15</text>
<text x="197" y="1023.7" textLength="62" lengthAdjust="spacingAndGlyphs">GBPJPY,M5</text>
<text x="280.5" y="1023.7" textLength="71" lengthAdjust="spacingAndGlyphs">USDJPY,M15</text>
<text x="373.5" y="1023.7" textLength="73.5" lengthAdjust="spacingAndGlyphs">GBPUSD,M15</text>
<text x="470" y="1023.7" textLength="75.6" lengthAdjust="spacingAndGlyphs">USDCAD,M15</text>
<text x="570.7" y="1023.7" textLength="66.8" lengthAdjust="spacingAndGlyphs">EURUSD,M5</text>
<text x="660" y="1023.7" textLength="67" lengthAdjust="spacingAndGlyphs">XAUUSD,H1</text>
<text x="748" y="1023.7" textLength="75.6" lengthAdjust="spacingAndGlyphs">EURCAD,M15</text>
<text x="845" y="1023.7" textLength="68.6" lengthAdjust="spacingAndGlyphs" style="fill:#000">XAUUSD,M5</text>
</g>
<path d="M1891 1015V1022L1887.5 1018.5ZM1908 1015V1022L1911.5 1018.5Z" fill="#9a9aa8"/>

<!-- status bar -->
<g class="s">
<text x="1" y="1046.5" textLength="89" lengthAdjust="spacingAndGlyphs">For Help, press F1</text>
<text x="1245.4" y="1046.5" textLength="35.6" lengthAdjust="spacingAndGlyphs">Default</text>
<text x="1355" y="1046.5" textLength="87" lengthAdjust="spacingAndGlyphs">2023.01.13 03:40</text>
<text x="1454.8" y="1046.5" textLength="56.2" lengthAdjust="spacingAndGlyphs">O: 1896.83</text>
<text x="1528" y="1046.5" textLength="53.6" lengthAdjust="spacingAndGlyphs">H: 1898.90</text>
<text x="1598" y="1046.5" textLength="53.4" lengthAdjust="spacingAndGlyphs">L: 1896.64</text>
<text x="1667" y="1046.5" textLength="55.4" lengthAdjust="spacingAndGlyphs">C: 1898.65</text>
<text x="1738" y="1046.5" textLength="32" lengthAdjust="spacingAndGlyphs">V: 801</text>
<text x="1832" y="1046.5" textLength="47" lengthAdjust="spacingAndGlyphs">2871/3 kb</text>
</g>
<path d="M1240.5 1033V1051M1349.5 1033V1051M1450.5 1033V1051M1522.5 1033V1051M1593.5 1033V1051M1663.5 1033V1051M1733.5 1033V1051M1799.5 1033V1051" stroke="#5a5aa0" shape-rendering="crispEdges"/>
<path d="M1805 1038.5H1828" stroke="#6f8e1e" stroke-width="7" stroke-dasharray="2 1" shape-rendering="crispEdges"/>
<path d="M1805 1045H1828" stroke="#2f6f9f" stroke-width="6" stroke-dasharray="2 1" shape-rendering="crispEdges"/>

<!-- bottom floating window -->
<rect x="239" y="1045" width="381" height="7" fill="#e1e1f0"/>
<path d="M239 1045.5H620" stroke="#fff"/>
<path d="M620.5 1045V1052" stroke="#6a6aa8" stroke-width="1.4"/>
<rect x="241" y="1048" width="376" height="4" fill="url(#gr)"/>
<rect x="248" y="1048" width="4" height="4" fill="#d8b020"/>
<rect x="579" y="1048" width="15" height="4" fill="#e8e8f2"/><rect x="597" y="1048" width="15" height="4" fill="#e8e8f2"/>
</svg>
</body></html>
